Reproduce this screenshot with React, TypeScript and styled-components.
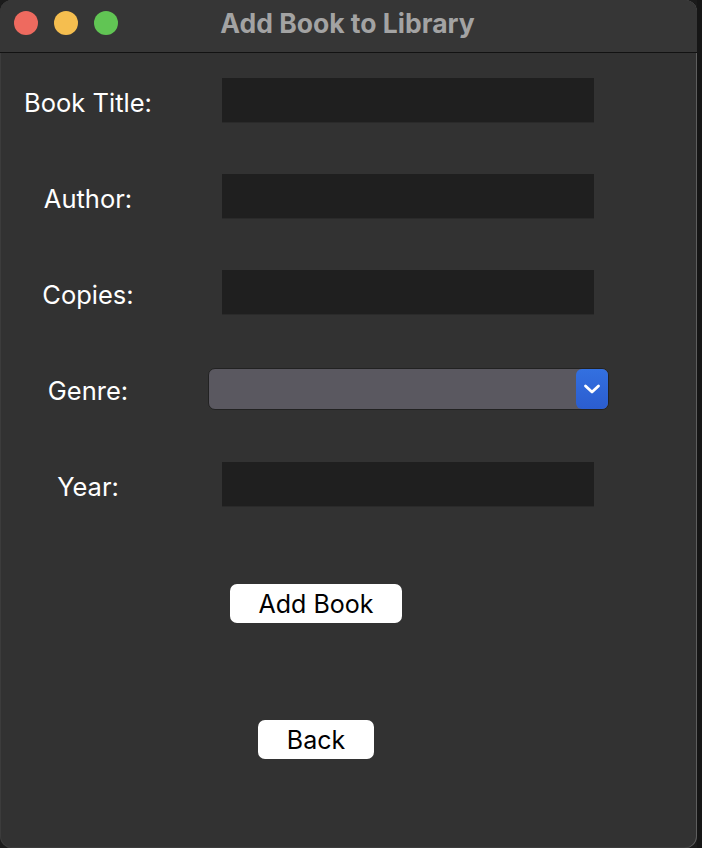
import React from 'react';
import styled, { createGlobalStyle } from 'styled-components';

const GlobalStyle = createGlobalStyle`
    html, body {
        margin: 0;
        padding: 0;
        background: #1b1b1b;
        font-family: Inter, 'Noto Sans', sans-serif;
    }
`

const fields = ['Book Title:', 'Author:', 'Copies:', 'Genre:', 'Year:'];

function App() {
    return (
        <>
        <GlobalStyle />
        <Screen>
            <Window>
                <TitleBar>
                    <Lights>
                        <Light color={'#ee6a5f'} />
                        <Light color={'#f5be4f'} />
                        <Light color={'#61c554'} />
                    </Lights>
                    <Title>Add Book to Library</Title>
                </TitleBar>

                <Form>
                    {fields.map(label => (
                        <Row key={label}>
                            <Label>{label}</Label>
                            {label === 'Genre:' ? (
                                <Select>
                                    <SelectArrow>
                                        <svg width="18" height="12" viewBox="0 0 18 12">
                                            <path d="M2.5 3 L9 9 L15.5 3" fill="none" stroke="#fff" strokeWidth="2.8" strokeLinecap="round" strokeLinejoin="round" />
                                        </svg>
                                    </SelectArrow>
                                </Select>
                            ) : (
                                <Input />
                            )}
                        </Row>
                    ))}
                </Form>

                <Buttons>
                    <Button>Add Book</Button>
                    <Button>Back</Button>
                </Buttons>
            </Window>
            <Backdrop />
        </Screen>
        </>
    )
}

const Screen = styled.div`
    display: flex;
    width: 702px;
    height: 848px;
    overflow: hidden;
`

const Window = styled.div`
    width: 697px;
    height: 848px;
    flex-shrink: 0;
    background: #323232;
    border-radius: 12px;
    box-shadow: inset -1px 0 0 #5e5e5e, inset 0 0 0 1px #3c3c3c;
    overflow: hidden;
    display: flex;
    flex-direction: column;
`

const Backdrop = styled.div`
    flex: 1;
    background: #161616;
`

const TitleBar = styled.div`
    position: relative;
    height: 52px;
    flex-shrink: 0;
    background: #363636;
    border-bottom: 1px solid #121212;
    display: flex;
    align-items: center;
    justify-content: center;
`

const Lights = styled.div`
    position: absolute;
    left: 14px;
    top: 11px;
    display: flex;
    gap: 16px;
`

const Light = styled.div<{color: string}>`
    width: 24px;
    height: 24px;
    border-radius: 50%;
    background: ${props => props.color};
`

const Title = styled.div`
    font-size: 26.5px;
    font-weight: 700;
    color: #a3a3a3;
    margin-top: -7px;
    margin-left: -2px;
`

const Form = styled.div`
    display: flex;
    flex-direction: column;
    gap: 52px;
    padding-top: 25px;
`

const Row = styled.div`
    display: grid;
    grid-template-columns: 176px 464px;
    align-items: center;
    height: 44px;
`

const Label = styled.div`
    text-align: center;
    font-size: 25.5px;
    color: #ffffff;
    padding-top: 5px;
`

const Input = styled.div`
    justify-self: center;
    width: 372px;
    height: 44px;
    background: #1f1f1f;
    box-shadow: 0 1px 0 #2a2a2a;
`

const Select = styled.div`
    justify-self: center;
    width: 401px;
    height: 42px;
    margin-top: 2px;
    box-sizing: border-box;
    background: #5a5860;
    border: 1px solid #222222;
    border-radius: 7px;
    display: flex;
    justify-content: flex-end;
`

const SelectArrow = styled.div`
    width: 32px;
    height: 100%;
    background: linear-gradient(#3370e0, #2b5dcf);
    border-radius: 6px;
    display: flex;
    align-items: center;
    justify-content: center;
`

const Buttons = styled.div`
    width: 632px;
    display: flex;
    flex-direction: column;
    align-items: center;
    gap: 97px;
    padding-top: 78px;
`

const Button = styled.div`
    height: 39px;
    padding: 0 29px;
    box-sizing: border-box;
    background: #ffffff;
    border-radius: 7px;
    color: #000000;
    font-size: 25px;
    display: flex;
    align-items: center;
    justify-content: center;
`

export default App;
